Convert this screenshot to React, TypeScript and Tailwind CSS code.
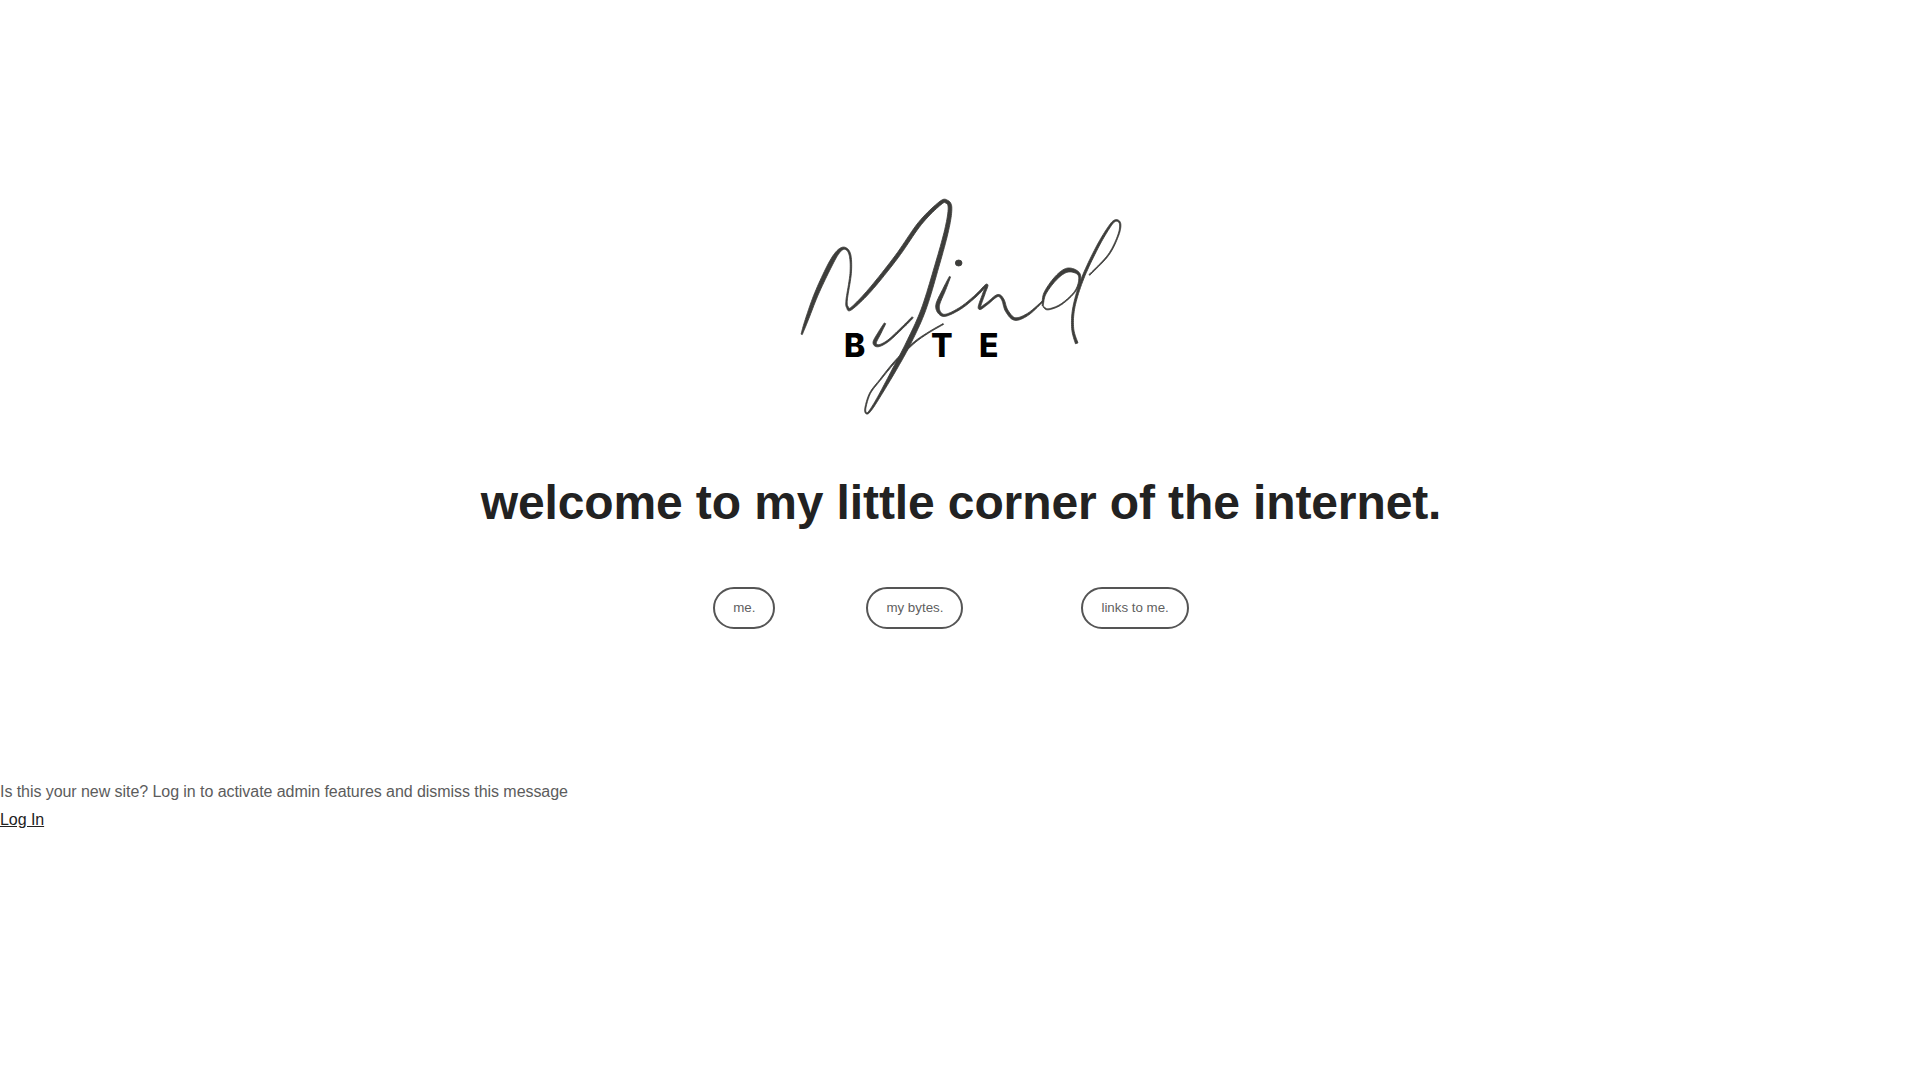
type Pt = [number, number, number];

// pen strokes of the logo, [x, y, width] in a 1080x750 box
const strokes: Pt[][] = [
  [[65,463,4],[80,420,9],[110,340,12],[150,255,13],[175,215,10],[195,205,6],[210,225,5],[212,280,4],[200,360,4],[203,383,6],[215,385,7],[270,330,10],[350,230,11],[420,130,11],[480,70,10],[500,65,10],[510,85,11],[500,150,12],[470,260,13],[430,390,14],[385,490,14],[345,565,12],[300,645,7],[272,690,5],[260,700,4],[256,685,3],[270,640,3],[300,600,3],[345,545,4],[400,490,4],[445,458,3],[490,432,3]],
  [[315,430,5],[298,460,9],[284,488,10],[296,497,6],[325,482,5],[365,445,5],[398,412,5]],
  [[510,290,4],[492,330,9],[473,375,11],[480,400,8],[500,405,6],[545,382,6],[590,345,6],[620,315,6],[612,340,7],[598,384,7],[620,372,6],[652,347,6],[668,358,7],[680,392,8],[705,417,8],[745,402,6],[790,362,3]],
  [[788,378,3],[795,340,7],[830,292,10],[865,270,12],[898,285,7],[888,330,3],[845,372,3],[805,388,3],[790,380,3]],
  [[890,490,8],[878,445,6],[882,380,6],[908,295,7],[950,205,7],[985,145,6],[1005,122,5],[1020,130,4],[1015,165,3],[985,225,3],[928,285,3]],
];

// smooth the points and turn them into a filled ribbon, so the line can swell and thin
function ribbon(pts: Pt[]) {
  const line: Pt[] = [];
  for (let i = 0; i < pts.length - 1; i++) {
    const a = pts[Math.max(i - 1, 0)];
    const b = pts[i];
    const c = pts[i + 1];
    const d = pts[Math.min(i + 2, pts.length - 1)];
    for (let s = 0; s < 10; s++) {
      const t = s / 10;
      const at = (k: number) =>
        0.5 * (2 * b[k] + (c[k] - a[k]) * t + (2 * a[k] - 5 * b[k] + 4 * c[k] - d[k]) * t * t + (3 * b[k] - a[k] - 3 * c[k] + d[k]) * t * t * t);
      line.push([at(0), at(1), at(2)]);
    }
  }
  line.push(pts[pts.length - 1]);
  const left: string[] = [];
  const right: string[] = [];
  line.forEach((p, i) => {
    const prev = line[Math.max(i - 1, 0)];
    const next = line[Math.min(i + 1, line.length - 1)];
    const dx = next[0] - prev[0];
    const dy = next[1] - prev[1];
    const len = Math.hypot(dx, dy) || 1;
    const nx = (-dy / len) * (p[2] / 2);
    const ny = (dx / len) * (p[2] / 2);
    left.push(`${(p[0] + nx).toFixed(1)},${(p[1] + ny).toFixed(1)}`);
    right.unshift(`${(p[0] - nx).toFixed(1)},${(p[1] - ny).toFixed(1)}`);
  });
  return "M" + left.concat(right).join("L") + "Z";
}

const Logo = () => (
  <svg viewBox="0 0 1080 750" className="block w-[360px] h-[250px]">
    <g fill="#000000" fontFamily="Inter, sans-serif" fontWeight={800} fontSize={96}>
      <text x={192} y={532}>B</text>
      <text x={453} y={532}>T</text>
      <text x={597} y={532}>E</text>
    </g>
    <g fill="#3d3d3b" stroke="#3d3d3b" strokeWidth={2.5} strokeLinejoin="round">
      {strokes.map((s, i) => (
        <path key={i} d={ribbon(s)} />
      ))}
      <ellipse cx={536} cy={249} rx={10} ry={9} />
    </g>
  </svg>
);

const PillButton = ({ label, className = "" }: { label: string; className?: string }) => (
  <button className={`h-[42px] px-[18px] border-2 border-[#555555] rounded-[21px] bg-white text-[13.33px] text-[#5f5f5f] ${className}`}>
    {label}
  </button>
);

const App = () => {
  return (
    <div className="min-h-screen bg-white font-['Liberation_Sans',Arial,sans-serif]">
      <div className="flex justify-center pt-[180px]">
        <Logo />
      </div>

      <h1 className="mt-[49px] pl-[2px] text-center text-[48px] leading-[48px] font-bold tracking-[-0.11px] text-[#222222]">
        welcome to my little corner of the internet.
      </h1>

      <div className="mt-[60px] flex justify-center pr-[18px]">
        <PillButton label="me." />
        <PillButton label="my bytes." className="ml-[91px]" />
        <PillButton label="links to me." className="ml-[118px]" />
      </div>

      <div className="mt-[149px] text-base leading-7 tracking-[-0.06px] text-[#5c5c5c]">
        <p>Is this your new site? Log in to activate admin features and dismiss this message</p>
        <a href="#" className="underline text-[#222222]">
          Log In
        </a>
      </div>
    </div>
  );
};

export default App;
